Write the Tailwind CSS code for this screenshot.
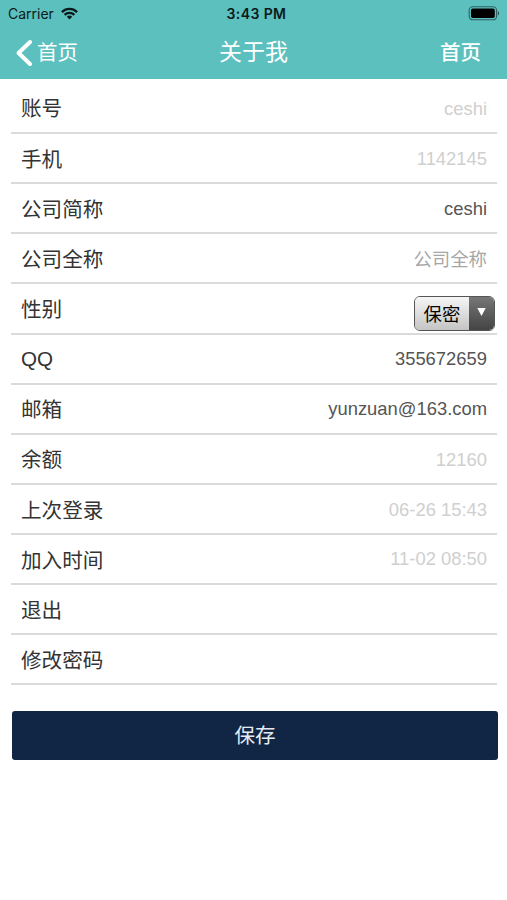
<!DOCTYPE html>
<html lang="zh-CN">
<head>
  <meta charset="UTF-8" />
  <meta name="viewport" content="width=device-width, initial-scale=1.0"/>
  <title>关于我</title>
  <script src="https://cdn.jsdelivr.net/npm/@tailwindcss/browser@4"></script>
</head>
<body class="bg-white font-['Liberation_Sans','Noto_Sans_CJK_SC',sans-serif] text-[#333]">
  <div class="min-h-screen">
    <header class="h-[79px] bg-[#5cc0be]">
      <!-- status bar -->
      <div class="grid h-[27px] grid-cols-3 items-center pl-[8px] pr-[7px] font-['Inter',sans-serif] text-[14px] leading-[27px] text-[#0b1a1a]">
        <div class="flex items-center gap-[7px]">
          <span>Carrier</span>
          <svg class="-mt-px h-[13px] w-[17px]" viewBox="0 0 17 13" fill="none" stroke="currentColor" stroke-width="2.3">
            <path d="M0.9 5.1a10.8 10.8 0 0 1 15.2 0"/>
            <path d="M3.6 7.9a6.9 6.9 0 0 1 9.8 0"/>
            <path d="M8.5 12.5l-2.7-2.8a3.9 3.9 0 0 1 5.4 0z" fill="currentColor" stroke="none"/>
          </svg>
        </div>
        <span class="pl-[5px] text-center font-semibold whitespace-nowrap tracking-[0.4px]">3:43 PM</span>
        <svg class="ml-auto h-[15px] w-[32px]" viewBox="0 0 32 15">
          <rect x="1.2" y="0.8" width="27.4" height="13" rx="3.6" fill="none" stroke="#2e605f" stroke-width="1.1"/>
          <rect x="3" y="2.6" width="23.8" height="9.4" rx="1.8" fill="#000"/>
          <path d="M29.8 5v4.6c1.9-.8 1.9-3.8 0-4.6z" fill="#2e605f"/>
        </svg>
      </div>
      <!-- nav bar -->
      <nav class="grid h-[52px] grid-cols-3 items-center pl-[15px] pr-[26px] text-[20.5px] leading-[50px] text-white">
        <a href="#" class="flex items-center gap-[5px]">
          <svg class="-mt-px h-[28px] w-[17px]" viewBox="0 0 17 28" fill="none" stroke="currentColor" stroke-width="4" stroke-linecap="round" stroke-linejoin="round">
            <path d="M15 3L3.6 14 15 25"/>
          </svg>
          <span>首页</span>
        </a>
        <h1 class="-mt-[2px] pl-[11px] text-center text-[23px]">关于我</h1>
        <a href="#" class="text-right font-medium">首页</a>
      </nav>
    </header>

    <form class="pt-[4.8px]">
      <ul class="ml-[11px] mr-[10px] text-[20.6px]">
        <li class="flex h-[50.15px] items-center justify-between border-b-2 border-[#dadada] px-[10px]">
          <label class="pt-[4px]">账号</label>
          <span class="pt-px text-[18.4px] text-[#cfcfcf]">ceshi</span>
        </li>
        <li class="flex h-[50.15px] items-center justify-between border-b-2 border-[#dadada] px-[10px]">
          <label class="pt-[4px]">手机</label>
          <span class="pt-px text-[18.4px] text-[#cfcfcf]">1142145</span>
        </li>
        <li class="flex h-[50.15px] items-center justify-between border-b-2 border-[#dadada] px-[10px]">
          <label class="pt-[4px]">公司简称</label>
          <span class="pt-px text-[18.4px] text-[#555]">ceshi</span>
        </li>
        <li class="flex h-[50.15px] items-center justify-between border-b-2 border-[#dadada] px-[10px]">
          <label class="pt-[4px]">公司全称</label>
          <span class="pt-[4px] text-[18.4px] text-[#a6a6a6]">公司全称</span>
        </li>
        <li class="flex h-[50.15px] items-center justify-between border-b-2 border-[#dadada] pl-[10px] pr-[2px]">
          <label class="pt-[4px]">性别</label>
          <button type="button" class="mt-[10px] flex h-[35px] w-[81px] overflow-hidden rounded-[6px] border border-[#555] text-[18.4px] text-black">
            <span class="flex flex-1 items-center justify-center bg-linear-to-b from-[#f6f6f6] to-[#c4c4c4] pt-[2px]">保密</span>
            <span class="flex w-[25px] items-center justify-center bg-linear-to-b from-[#777] to-[#444]">
              <svg class="-mt-[3px] h-[8px] w-[9px]" viewBox="0 0 9 8" fill="#fff"><path d="M0.3 0h8.4L4.5 8z"/></svg>
            </span>
          </button>
        </li>
        <li class="flex h-[50.15px] items-center justify-between border-b-2 border-[#dadada] px-[10px]">
          <label class="pt-[2px]">QQ</label>
          <span class="pt-px text-[18.4px] text-[#555]">355672659</span>
        </li>
        <li class="flex h-[50.15px] items-center justify-between border-b-2 border-[#dadada] px-[10px]">
          <label class="pt-[4px]">邮箱</label>
          <span class="pt-px text-[18.4px] text-[#555]">yunzuan@163.com</span>
        </li>
        <li class="flex h-[50.15px] items-center justify-between border-b-2 border-[#dadada] px-[10px]">
          <label class="pt-[4px]">余额</label>
          <span class="pt-px text-[18.4px] text-[#cfcfcf]">12160</span>
        </li>
        <li class="flex h-[50.15px] items-center justify-between border-b-2 border-[#dadada] px-[10px]">
          <label class="pt-[4px]">上次登录</label>
          <span class="pt-px text-[18.4px] text-[#cfcfcf]">06-26 15:43</span>
        </li>
        <li class="flex h-[50.15px] items-center justify-between border-b-2 border-[#dadada] px-[10px]">
          <label class="pt-[4px]">加入时间</label>
          <span class="text-[18.4px] text-[#cfcfcf]">11-02 08:50</span>
        </li>
        <li class="flex h-[50.15px] items-center border-b-2 border-[#dadada] px-[10px]">
          <a href="#" class="pt-[4px]">退出</a>
        </li>
        <li class="flex h-[50.15px] items-center border-b-2 border-[#dadada] px-[10px]">
          <a href="#" class="pt-[4px]">修改密码</a>
        </li>
      </ul>
      <div class="mt-[25.2px] pl-[12px] pr-[9px]">
        <button type="submit" class="h-[49px] w-full rounded-[3px] bg-[#112544] pt-[2px] text-[20.6px] text-[#e4ebf3]">保存</button>
      </div>
    </form>
  </div>
</body>
</html>
